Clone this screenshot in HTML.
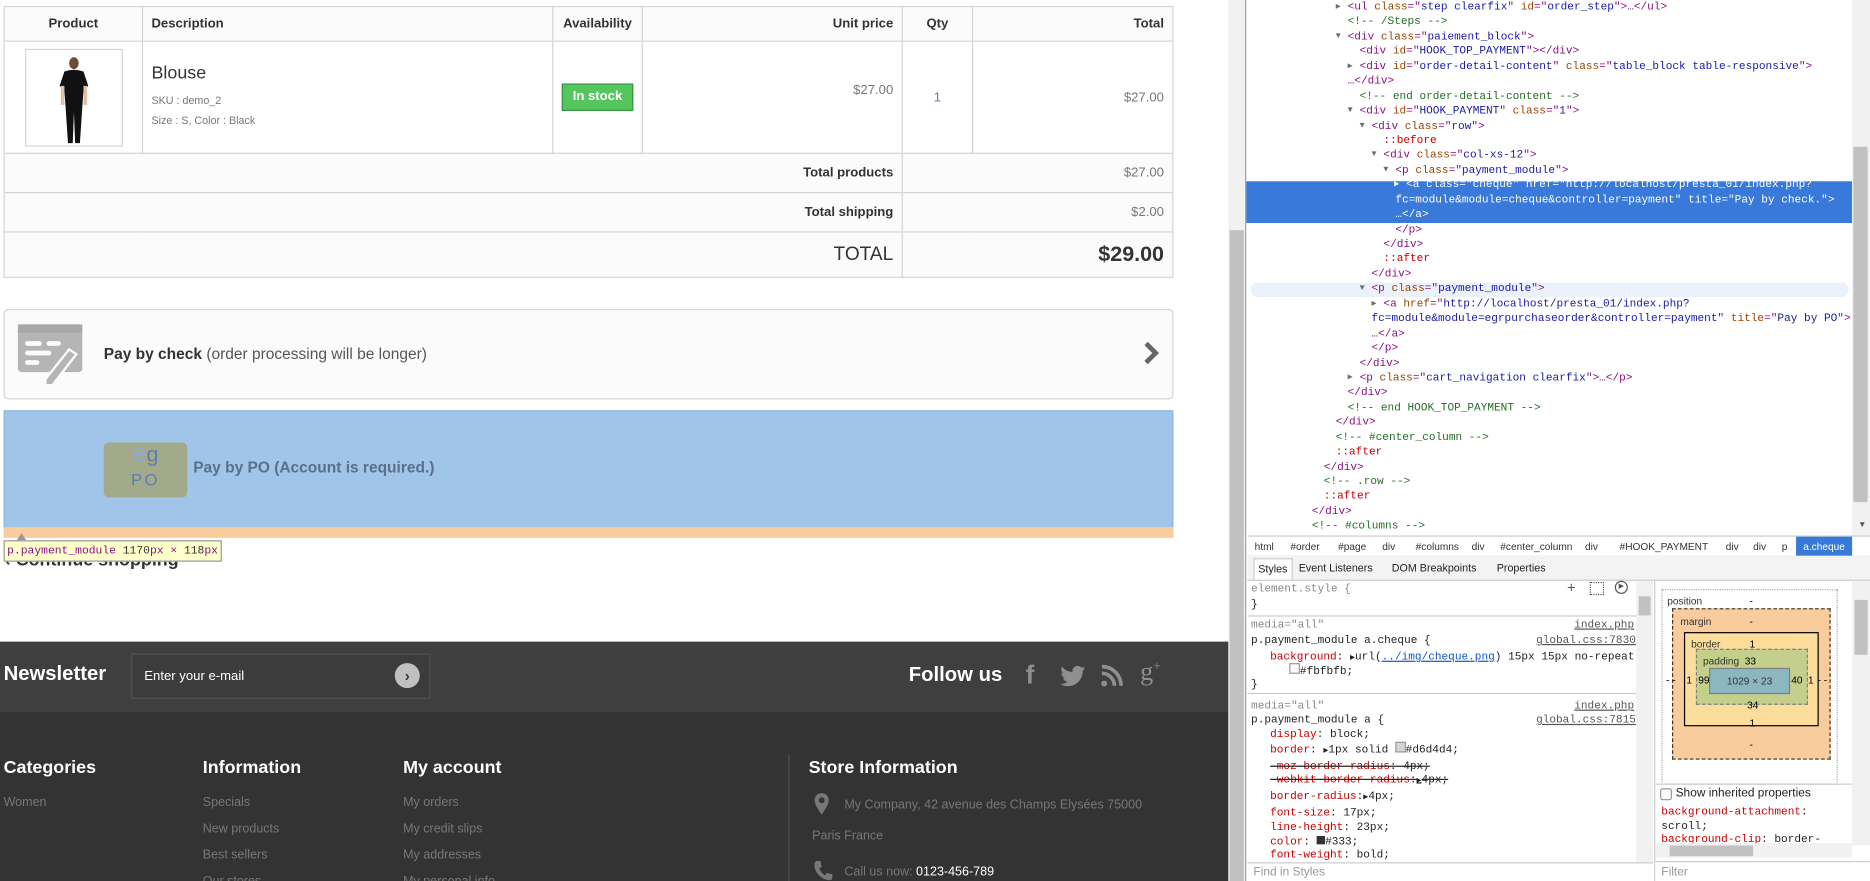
<!DOCTYPE html>
<html><head><meta charset="utf-8">
<style>
html,body{margin:0;padding:0;width:1870px;height:881px;overflow:hidden;background:#fff}
#r{position:absolute;left:0;top:0;width:1568px;height:739px;transform:scale(1.19260);transform-origin:0 0;font-family:"Liberation Sans",Arial,sans-serif;overflow:hidden}
.a{position:absolute;white-space:nowrap}
table.cart{position:absolute;left:3px;top:5px;width:981px;border-collapse:collapse;font-size:11px;color:#333}
table.cart td{border:1px solid #d6d4d4;padding:0 7px}
.hd td{background:#fbfbfb;font-weight:bold;height:28px}
.tot td{background:#fbfbfb;height:32px}
.mono{font-family:"Liberation Mono",monospace}
#dom{position:absolute;left:1046px;top:0;width:507px;height:448px;font-family:"Liberation Mono",monospace;font-size:9.3px;line-height:12.45px;color:#881280}
#dom div{position:relative;height:12.45px;white-space:nowrap}
.an{color:#994500}.av{color:#1a1aa6}.c{color:#236e25}.ps{color:#c80000}
.tr{display:inline-block;width:10px;margin-left:-10px;color:#6e6e6e;font-size:7px;vertical-align:top}
.sel,.sel span{color:#fff!important}
.sty{font-family:"Liberation Mono",monospace;font-size:9.3px;color:#222}
.pr{color:#c80000}
</style></head><body><div id="r">

<table class="cart">
<tr class="hd"><td style="width:101px;text-align:center">Product</td><td style="width:329px">Description</td><td style="width:59px;text-align:center">Availability</td><td style="width:203px;text-align:right">Unit price</td><td style="width:44px;text-align:center">Qty</td><td style="text-align:right">Total</td></tr>
<tr style="height:94px"><td style="text-align:center"><div style="width:80px;height:80px;border:1px solid #d6d4d4;margin:0 auto;position:relative;background:#fff">
<svg width="80" height="80" viewBox="0 0 80 80"><ellipse cx="40" cy="11" rx="4" ry="5" fill="#6b4a3a"/><path d="M32 18 Q40 15 48 18 L52 30 L48 34 L47 48 L45 78 L41 78 L40 52 L39 78 L35 78 L33 48 L32 34 L28 30Z" fill="#111"/><rect x="29" y="30" width="3" height="16" fill="#e0c0a8"/><rect x="48" y="30" width="3" height="16" fill="#e0c0a8"/></svg></div></td>
<td style="vertical-align:middle"><div style="font-size:15px;color:#333;margin-bottom:6px">Blouse</div><div style="font-size:9px;color:#777;line-height:17px">SKU : demo_2<br>Size : S, Color : Black</div></td>
<td style="text-align:center"><span style="display:inline-block;background:#55c65e;border:1px solid #36943e;color:#fff;font-weight:bold;font-size:11px;width:58px;height:21px;line-height:21px">In stock</span></td>
<td style="text-align:right;color:#777;vertical-align:top;padding-top:35px">$27.00</td>
<td style="text-align:center;color:#5b80b2">1</td>
<td style="text-align:right;color:#777">$27.00</td></tr>
<tr class="tot"><td colspan="4" style="text-align:right;font-weight:bold">Total products</td><td colspan="2" style="text-align:right;color:#777">$27.00</td></tr>
<tr class="tot"><td colspan="4" style="text-align:right;font-weight:bold">Total shipping</td><td colspan="2" style="text-align:right;color:#777">$2.00</td></tr>
<tr class="tot" style="height:38px"><td colspan="4" style="text-align:right;font-size:16px;height:36px">TOTAL</td><td colspan="2" style="text-align:right;font-size:18px;font-weight:bold">$29.00</td></tr>
</table>

<div class="a" style="left:3px;top:259px;width:979px;height:74px;background:#fbfbfb;border:1px solid #d6d4d4;border-radius:4px"></div>
<svg class="a" style="left:14px;top:271px" width="58" height="56" viewBox="0 0 58 56"><rect x="1" y="1" width="54" height="40" rx="3" fill="#b5b5b5"/><rect x="1" y="1" width="54" height="7" fill="#a8a8a8"/><rect x="7" y="15" width="14" height="4" rx="2" fill="#fbfbfb"/><rect x="25" y="15" width="12" height="4" rx="2" fill="#fbfbfb"/><rect x="7" y="23" width="22" height="4" rx="2" fill="#fbfbfb"/><rect x="7" y="31" width="12" height="4" rx="2" fill="#fbfbfb"/><path d="M44 22 L50 26 L30 52 L24 52 L24 47Z" fill="#b5b5b5" stroke="#fbfbfb" stroke-width="2"/></svg>
<div class="a" style="left:87px;top:289px;font-size:13px;color:#333"><b>Pay by check</b> <span style="color:#555">(order processing will be longer)</span></div>
<svg class="a" style="left:958px;top:286px" width="14" height="20" viewBox="0 0 14 20"><path d="M3 2 L11 10 L3 18" stroke="#666" stroke-width="4" fill="none"/></svg>

<div class="a" style="left:3px;top:344px;width:979px;height:97px;background:#a0c5e8;border:1px solid #8db6dc"></div>
<div class="a" style="left:3px;top:442px;width:981px;height:9px;background:#f9cc9d"></div>
<div class="a" style="left:87px;top:371px;width:70px;height:46px;background:#a3aa8c;border-radius:4px;text-align:center;font-size:18px;line-height:20px;color:#5a7fae"><span style="color:#8eaad0;font-size:21px">e</span>g<br><span style="font-size:14px;letter-spacing:2px">PO</span></div>
<div class="a" style="left:162px;top:384px;font-size:13px;font-weight:bold;color:#5a6f8a">Pay by PO (Account is required.)</div>

<div class="a" style="left:4px;top:461px;font-size:15px;font-weight:bold;color:#333">&#8249; Continue shopping</div>
<div class="a mono" style="left:3px;top:453px;height:16px;line-height:16px;padding:0 2px;background:#ffffcc;border:1px solid #999;font-size:9.5px;color:#881280">p.payment_module <span style="color:#333">1170</span><span style="color:#881280">px</span> × <span style="color:#333">118</span><span style="color:#881280">px</span></div>
<div class="a" style="left:14px;top:447px;width:0;height:0;border-left:4px solid transparent;border-right:4px solid transparent;border-bottom:6px solid #999"></div>

<div class="a" style="left:0;top:538px;width:1030px;height:59px;background:#3f3f3f"></div>
<div class="a" style="left:0;top:597px;width:1030px;height:142px;background:#333"></div>
<div class="a" style="left:3px;top:555px;font-size:17px;font-weight:bold;color:#fff">Newsletter</div>
<div class="a" style="left:110px;top:548px;width:249px;height:36px;border:1px solid #515151;background:#3c3c3c"></div>
<div class="a" style="left:121px;top:561px;font-size:11px;color:#fff">Enter your e-mail</div>
<div class="a" style="left:331px;top:556px;width:21px;height:21px;border-radius:50%;background:#c0c0c0;color:#3c3c3c;font-size:13px;font-weight:bold;text-align:center;line-height:21px">&#x203A;</div>
<div class="a" style="left:762px;top:556px;font-size:17px;font-weight:bold;color:#fff">Follow us</div>
<div class="a" style="left:860px;top:553px;font-size:22px;font-weight:bold;color:#8f8f8f">f</div>
<svg class="a" style="left:889px;top:558px" width="21" height="18" viewBox="0 0 24 20"><path d="M24 2.4a9.8 9.8 0 0 1-2.8.8A4.9 4.9 0 0 0 23.3.5a9.8 9.8 0 0 1-3.1 1.2A4.9 4.9 0 0 0 11.8 6 14 14 0 0 1 1.7.9a4.9 4.9 0 0 0 1.5 6.6A4.9 4.9 0 0 1 1 6.9a4.9 4.9 0 0 0 3.9 4.8 4.9 4.9 0 0 1-2.2.1 4.9 4.9 0 0 0 4.6 3.4A9.9 9.9 0 0 1 0 17.3 14 14 0 0 0 7.5 19.5c9 0 14-7.5 14-14v-.6A10 10 0 0 0 24 2.4z" fill="#8f8f8f"/></svg>
<svg class="a" style="left:923px;top:557px" width="19" height="19" viewBox="0 0 20 20"><circle cx="3" cy="17" r="2.6" fill="#8f8f8f"/><path d="M1 8a11 11 0 0 1 11 11M1 2a17 17 0 0 1 17 17" stroke="#8f8f8f" stroke-width="3.2" fill="none"/></svg>
<div class="a" style="left:956px;top:550px;font-size:22px;color:#8f8f8f;font-family:'Liberation Serif',serif">g<sup style="font-size:11px">+</sup></div>

<div class="a" style="left:661px;top:633px;width:1px;height:106px;background:#515151"></div>
<div class="a" style="left:3px;top:635px;color:#fff;font-size:15px;font-weight:bold">Categories</div>
<div class="a" style="left:170px;top:635px;color:#fff;font-size:15px;font-weight:bold">Information</div>
<div class="a" style="left:338px;top:635px;color:#fff;font-size:15px;font-weight:bold">My account</div>
<div class="a" style="left:678px;top:635px;color:#fff;font-size:15px;font-weight:bold">Store Information</div>
<div class="a" style="left:3px;top:662px;font-size:10.5px;color:#777;line-height:22px">Women</div>
<div class="a" style="left:170px;top:662px;font-size:10.5px;color:#777;line-height:22px">Specials<br>New products<br>Best sellers<br>Our stores</div>
<div class="a" style="left:338px;top:662px;font-size:10.5px;color:#777;line-height:22px">My orders<br>My credit slips<br>My addresses<br>My personal info</div>
<svg class="a" style="left:683px;top:665px" width="12" height="18" viewBox="0 0 12 18"><path d="M6 0a6 6 0 0 0-6 6c0 4 6 12 6 12s6-8 6-12a6 6 0 0 0-6-6zm0 8.5a2.5 2.5 0 1 1 0-5 2.5 2.5 0 0 1 0 5z" fill="#777"/></svg>
<div class="a" style="left:708px;top:669px;font-size:10.5px;color:#777">My Company, 42 avenue des Champs Elysées 75000</div>
<div class="a" style="left:681px;top:695px;font-size:10.5px;color:#777">Paris France</div>
<svg class="a" style="left:682px;top:721px" width="16" height="18" viewBox="0 0 16 18"><path d="M3 1l3 0 1 5-2 1c1 3 3 5 5 6l1-2 5 1v3c0 1-1 2-2 2C7 17 0 10 1 3c0-1 1-2 2-2z" fill="#777"/></svg>
<div class="a" style="left:708px;top:725px;font-size:10.5px;color:#777">Call us now: <span style="color:#fff">0123-456-789</span></div>

<div class="a" style="left:1030px;top:0;width:14px;height:739px;background:#f1f1f1"></div>
<div class="a" style="left:1031px;top:193px;width:12px;height:546px;background:#c1c1c1"></div>
<div class="a" style="left:1044px;top:0;width:1px;height:739px;background:#a0a0a0"></div>

<div class="a" style="left:1045px;top:152px;width:508px;height:35px;background:#3879d9"></div>
<div class="a" style="left:1049px;top:237px;width:501px;height:12px;background:#eaf1fb;border-radius:5px"></div>
<div id="dom">
<div style="left:84px"><span class="tr">&#9654;</span>&lt;ul <span class="an">class</span>="<span class="av">step clearfix</span>" <span class="an">id</span>="<span class="av">order_step</span>"&gt;…&lt;/ul&gt;</div>
<div style="left:84px" class="c">&lt;!-- /Steps --&gt;</div>
<div style="left:84px"><span class="tr">&#9660;</span>&lt;div <span class="an">class</span>="<span class="av">paiement_block</span>"&gt;</div>
<div style="left:94px">&lt;div <span class="an">id</span>="<span class="av">HOOK_TOP_PAYMENT</span>"&gt;&lt;/div&gt;</div>
<div style="left:94px"><span class="tr">&#9654;</span>&lt;div <span class="an">id</span>="<span class="av">order-detail-content</span>" <span class="an">class</span>="<span class="av">table_block table-responsive</span>"&gt;</div>
<div style="left:84px">…&lt;/div&gt;</div>
<div style="left:94px" class="c">&lt;!-- end order-detail-content --&gt;</div>
<div style="left:94px"><span class="tr">&#9660;</span>&lt;div <span class="an">id</span>="<span class="av">HOOK_PAYMENT</span>" <span class="an">class</span>="<span class="av">1</span>"&gt;</div>
<div style="left:104px"><span class="tr">&#9660;</span>&lt;div <span class="an">class</span>="<span class="av">row</span>"&gt;</div>
<div style="left:114px" class="ps">::before</div>
<div style="left:114px"><span class="tr">&#9660;</span>&lt;div <span class="an">class</span>="<span class="av">col-xs-12</span>"&gt;</div>
<div style="left:124px"><span class="tr">&#9660;</span>&lt;p <span class="an">class</span>="<span class="av">payment_module</span>"&gt;</div>
<div style="left:133px" class="sel"><span class="tr">&#9654;</span>&lt;a class="cheque" href="http://localhost/presta_01/index.php?</div>
<div style="left:124px" class="sel">fc=module&amp;module=cheque&amp;controller=payment" title="Pay by check."&gt;</div>
<div style="left:124px" class="sel">…&lt;/a&gt;</div>
<div style="left:124px">&lt;/p&gt;</div>
<div style="left:114px">&lt;/div&gt;</div>
<div style="left:114px" class="ps">::after</div>
<div style="left:104px">&lt;/div&gt;</div>
<div style="left:104px"><span class="tr">&#9660;</span>&lt;p <span class="an">class</span>="<span class="av">payment_module</span>"&gt;</div>
<div style="left:114px"><span class="tr">&#9654;</span>&lt;a <span class="an">href</span>="<span class="av">http://localhost/presta_01/index.php?</span></div>
<div style="left:104px"><span class="av">fc=module&amp;module=egrpurchaseorder&amp;controller=payment</span>" <span class="an">title</span>="<span class="av">Pay by PO</span>"&gt;</div>
<div style="left:104px">…&lt;/a&gt;</div>
<div style="left:104px">&lt;/p&gt;</div>
<div style="left:94px">&lt;/div&gt;</div>
<div style="left:94px"><span class="tr">&#9654;</span>&lt;p <span class="an">class</span>="<span class="av">cart_navigation clearfix</span>"&gt;…&lt;/p&gt;</div>
<div style="left:84px">&lt;/div&gt;</div>
<div style="left:84px" class="c">&lt;!-- end HOOK_TOP_PAYMENT --&gt;</div>
<div style="left:74px">&lt;/div&gt;</div>
<div style="left:74px" class="c">&lt;!-- #center_column --&gt;</div>
<div style="left:74px" class="ps">::after</div>
<div style="left:64px">&lt;/div&gt;</div>
<div style="left:64px" class="c">&lt;!-- .row --&gt;</div>
<div style="left:64px" class="ps">::after</div>
<div style="left:54px">&lt;/div&gt;</div>
<div style="left:54px" class="c">&lt;!-- #columns --&gt;</div>
</div>
<div class="a" style="left:1553px;top:0;width:15px;height:449px;background:#f1f1f1"></div>
<div class="a" style="left:1554px;top:123px;width:12px;height:298px;background:#c1c1c1;border-radius:1px"></div>
<div class="a" style="left:1558px;top:437px;font-size:7px;color:#555">&#9660;</div>

<div class="a" style="left:1046px;top:449px;width:522px;height:16px;border-top:1px solid #ccc;border-bottom:1px solid #ccc;background:#fff;font-size:8.5px;color:#333;line-height:16px">
<span class="a" style="left:6px">html</span><span class="a" style="left:36px">#order</span><span class="a" style="left:76px">#page</span><span class="a" style="left:113px">div</span><span class="a" style="left:141px">#columns</span><span class="a" style="left:188px">div</span><span class="a" style="left:212px">#center_column</span><span class="a" style="left:283px">div</span><span class="a" style="left:312px">#HOOK_PAYMENT</span><span class="a" style="left:401px">div</span><span class="a" style="left:424px">div</span><span class="a" style="left:448px">p</span><span class="a" style="left:460px;width:47px;background:#3879d9;color:#fff;text-align:center">a.cheque</span></div>
<div class="a" style="left:1046px;top:466px;width:522px;height:20px;background:#f3f3f3;border-bottom:1px solid #ccc;font-size:9px;color:#222;line-height:20px">
<span class="a" style="left:5px;top:2px;height:17px;line-height:17px;padding:0 3px;background:#fff;border:1px solid #ccc;border-bottom:none">Styles</span><span class="a" style="left:43px">Event Listeners</span><span class="a" style="left:121px">DOM Breakpoints</span><span class="a" style="left:209px">Properties</span></div>

<div class="a sty" style="left:1049px;top:488px;color:#888">element.style {</div>
<div class="a sty" style="left:1049px;top:501px">}</div>
<div class="a" style="left:1314px;top:486px;font-size:12px;color:#555">+</div>
<div class="a" style="left:1333px;top:488px;width:10px;height:9px;border:1px dotted #555"></div>
<div class="a" style="left:1354px;top:487px;width:9px;height:9px;border:1px solid #555;border-radius:50%;font-size:6px;line-height:9px;text-align:center;color:#555">&#9654;</div>
<div class="a" style="left:1046px;top:516px;width:326px;height:1px;background:#ccc"></div>
<div class="a sty" style="left:1049px;top:518px;color:#888">media="all"</div>
<div class="a sty" style="left:1320px;top:518px;color:#555;text-decoration:underline">index.php</div>
<div class="a sty" style="left:1049px;top:531px">p.payment_module a.cheque {</div>
<div class="a sty" style="left:1288px;top:531px;color:#555;text-decoration:underline">global.css:7830</div>
<div class="a sty" style="left:1065px;top:545px"><span class="pr">background</span>: <span style="font-size:7px">&#9654;</span>url(<span style="color:#15c;text-decoration:underline">../img/cheque.png</span>) 15px 15px no-repeat</div>
<div class="a sty" style="left:1081px;top:556px"><span style="display:inline-block;width:7px;height:7px;border:1px solid #999;background:#fbfbfb"></span>#fbfbfb;</div>
<div class="a sty" style="left:1049px;top:568px">}</div>
<div class="a" style="left:1046px;top:581px;width:326px;height:1px;background:#ccc"></div>
<div class="a sty" style="left:1049px;top:586px;color:#888">media="all"</div>
<div class="a sty" style="left:1320px;top:586px;color:#555;text-decoration:underline">index.php</div>
<div class="a sty" style="left:1049px;top:598px">p.payment_module a {</div>
<div class="a sty" style="left:1288px;top:598px;color:#555;text-decoration:underline">global.css:7815</div>
<div class="a sty" style="left:1065px;top:610px;line-height:11.8px"><span class="pr">display</span>: block;<br><span class="pr">border</span>: <span style="font-size:7px">&#9654;</span>1px solid <span style="display:inline-block;width:7px;height:7px;border:1px solid #999;background:#d6d4d4"></span>#d6d4d4;<br><s><span class="pr">-moz-border-radius</span>: 4px;</s><br><s><span class="pr">-webkit-border-radius</span>:<span style="font-size:7px">&#9654;</span>4px;</s><br><span class="pr">border-radius</span>:<span style="font-size:7px">&#9654;</span>4px;<br><span class="pr">font-size</span>: 17px;<br><span class="pr">line-height</span>: 23px;<br><span class="pr">color</span>: <span style="display:inline-block;width:7px;height:7px;background:#333"></span>#333;<br><span class="pr">font-weight</span>: bold;<br><span class="pr">padding</span>:<span style="font-size:7px">&#9654;</span>33px 40px 34px 99px;</div>
<div class="a" style="left:1372px;top:487px;width:14px;height:236px;background:#f1f1f1"></div>
<div class="a" style="left:1374px;top:500px;width:10px;height:16px;background:#c1c1c1"></div>
<div class="a" style="left:1046px;top:723px;width:340px;height:16px;background:#fff;border-top:1px solid #ccc;font-size:10px;color:#999;line-height:16px;text-indent:5px">Find in Styles</div>
<div class="a" style="left:1387px;top:487px;width:1px;height:252px;background:#ccc"></div>

<div class="a" style="left:1393px;top:494px;width:146px;height:162px;border:1px dotted #aaa"></div>
<div class="a" style="left:1398px;top:499px;font-size:8.5px;color:#333">position</div>
<div class="a" style="left:1467px;top:499px;font-size:8.5px">-</div>
<div class="a" style="left:1402px;top:510px;width:131px;height:125px;background:#f9cc9d;border:1px dashed #333"></div>
<div class="a" style="left:1409px;top:516px;font-size:8.5px;color:#333">margin</div>
<div class="a" style="left:1467px;top:516px;font-size:8.5px">-</div>
<div class="a" style="left:1412px;top:530px;width:111px;height:77px;background:#fddd9b;border:1px solid #000"></div>
<div class="a" style="left:1418px;top:535px;font-size:8.5px;color:#333">border</div>
<div class="a" style="left:1467px;top:535px;font-size:8.5px">1</div>
<div class="a" style="left:1422px;top:544px;width:92px;height:45px;background:#c3cf8a;border:1px dashed #808080"></div>
<div class="a" style="left:1428px;top:549px;font-size:8.5px;color:#333">padding</div>
<div class="a" style="left:1463px;top:549px;font-size:8.5px">33</div>
<div class="a" style="left:1433px;top:560px;width:66px;height:20px;background:#8cb6c0;border:1px solid #808080;font-size:8.5px;text-align:center;line-height:20px;color:#333">1029 × 23</div>
<div class="a" style="left:1424px;top:565px;font-size:8.5px">99</div>
<div class="a" style="left:1502px;top:565px;font-size:8.5px">40</div>
<div class="a" style="left:1414px;top:565px;font-size:8.5px">1</div>
<div class="a" style="left:1516px;top:565px;font-size:8.5px">1</div>
<div class="a" style="left:1397px;top:565px;font-size:8.5px">- -</div>
<div class="a" style="left:1524px;top:565px;font-size:8.5px">- -</div>
<div class="a" style="left:1465px;top:586px;font-size:8.5px">34</div>
<div class="a" style="left:1467px;top:601px;font-size:8.5px">1</div>
<div class="a" style="left:1467px;top:619px;font-size:8.5px">-</div>
<div class="a" style="left:1388px;top:657px;width:165px;height:1px;background:#ccc"></div>
<div class="a" style="left:1392px;top:661px;width:8px;height:8px;border:1px solid #999;border-radius:2px;background:#fff"></div>
<div class="a" style="left:1405px;top:660px;font-size:10px;color:#222">Show inherited properties</div>
<div class="a sty" style="left:1393px;top:675px;line-height:11.5px"><span class="pr">background-attachment</span>:<br>scroll;<br><span class="pr">background-clip</span>: border-</div>
<div class="a" style="left:1553px;top:487px;width:15px;height:222px;background:#f1f1f1"></div>
<div class="a" style="left:1555px;top:503px;width:11px;height:46px;background:#c1c1c1"></div>
<div class="a" style="left:1388px;top:707px;width:165px;height:12px;background:#f1f1f1"></div>
<div class="a" style="left:1400px;top:709px;width:70px;height:9px;background:#c1c1c1"></div>
<div class="a" style="left:1388px;top:722px;width:180px;height:17px;background:#fff;border-top:1px solid #ccc;font-size:10px;color:#999;line-height:17px;text-indent:5px">Filter</div>
</div></body></html>
